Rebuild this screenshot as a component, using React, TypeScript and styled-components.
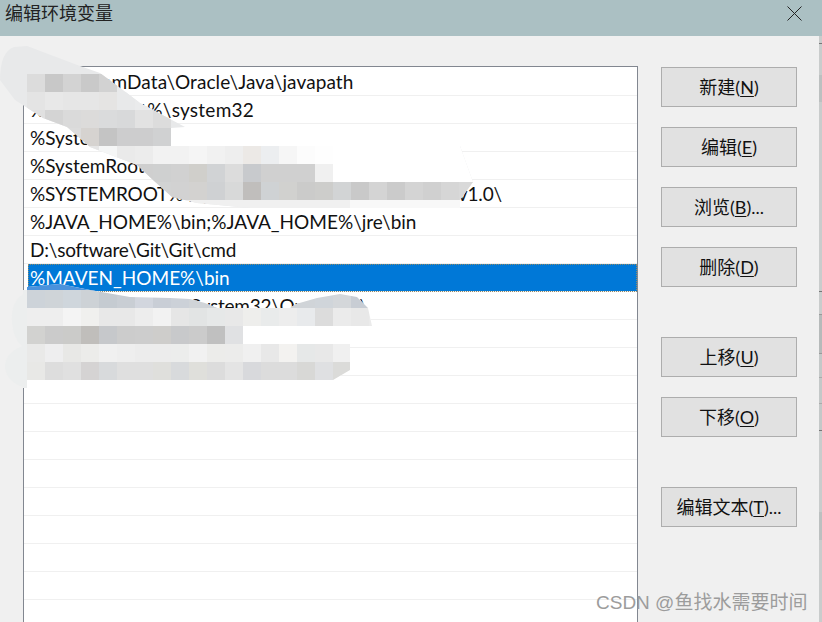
import { createGlobalStyle, styled } from "styled-components";

const GlobalStyle = createGlobalStyle`
  html, body {
    margin: 0;
    padding: 0;
    background: #f0f0f0;
  }
`;

const uiFont = `Lato, "Noto Sans CJK SC", sans-serif`;

// The dialog fills the whole photographed window and clips the list's lower part
const Dialog = styled.div`
  position: relative;
  width: 822px;
  height: 622px;
  overflow: hidden;
  background: #f0f0f0;
  font-family: ${uiFont};
  color: #111;
`;

const TitleBar = styled.div`
  height: 36px;
  padding-left: 5px;
  padding-right: 20px;
  display: flex;
  align-items: center;
  justify-content: space-between;
  background: #abc0c3;
`;

const Title = styled.span`
  font-family: "Noto Sans CJK SC", sans-serif;
  font-size: 18px;
  line-height: 26px;
  margin-top: -12px;
  color: #222;
`;

const CloseIcon = styled.svg`
  width: 15px;
  height: 15px;
  margin-top: -9px;
`;

const Body = styled.div`
  display: flex;
  padding: 30px 0 0 23px;
  gap: 23px;
`;

// Path list, it runs past the bottom of the window
const List = styled.ul`
  width: 613px;
  height: 640px;
  flex: none;
  margin: 0;
  padding: 1px 0 0;
  list-style: none;
  background: #fff;
  border: 1px solid #828790;
  border-bottom: none;
`;

// $tracking nudges a row's text so it ends where Segoe UI ended it
const Row = styled.li<{ $selected?: boolean; $tracking?: number }>`
  height: 27px;
  display: flex;
  align-items: center;
  font-size: 19px;
  line-height: 27px;
  letter-spacing: ${(p) => p.$tracking ?? 0}px;
  white-space: nowrap;
  overflow: hidden;
  border-bottom: 1px solid #f0f0f0;
  background: ${(p) => (p.$selected ? "#0078d7" : "transparent")};
  color: ${(p) => (p.$selected ? "#fff" : "#111")};
  margin-left: ${(p) => (p.$selected ? "4px" : "0")};
  padding-left: ${(p) => (p.$selected ? "2px" : "6px")};
  outline: ${(p) => (p.$selected ? "1px dotted #8f8a6a" : "none")};
  outline-offset: -1px;
`;

const ButtonColumn = styled.div`
  width: 136px;
  flex: none;
  padding-top: 1px;
  display: flex;
  flex-direction: column;
`;

const ButtonGroup = styled.div<{ $spaced?: boolean }>`
  display: flex;
  flex-direction: column;
  gap: 20px;
  margin-top: ${(p) => (p.$spaced ? "50px" : "0")};
`;

const DialogButton = styled.button`
  width: 136px;
  height: 40px;
  padding: 0 0 2px;
  box-sizing: border-box;
  background: #e1e1e1;
  border: 1px solid #adadad;
  font-family: ${uiFont};
  font-size: 18px;
  color: #111;
  u {
    text-underline-offset: 2px;
  }
`;

// Traces of the window behind, showing at the right edge
const BehindStrip = styled.div`
  position: absolute;
  top: 36px;
  right: 0;
  bottom: 0;
  width: 3px;
  background: linear-gradient(
    to bottom,
    #c9cccc 0 7px,
    #777 7px 8px,
    #c9cccc 8px 39px,
    #bcc0c0 39px 66px,
    #c9cccc 66px 255px,
    #777 255px 256px,
    #c9cccc 256px 278px,
    #999 278px 279px,
    #b6baba 279px 317px,
    #999 317px 318px,
    #c4c8c8 318px 341px,
    #aaa 341px 342px,
    #c4c8c8 342px 367px,
    #aaa 367px 368px,
    #c4c8c8 368px 394px,
    #777 394px 395px,
    #c9cccc 395px 476px,
    #bcc0c0 476px 504px,
    #c9cccc 504px
  );
`;

const Watermark = styled.div`
  position: absolute;
  left: 596px;
  top: 591px;
  font-family: "Liberation Sans", "Noto Sans CJK SC", sans-serif;
  font-size: 19px;
  line-height: 24px;
  color: #9c9c9c;
  white-space: nowrap;
`;

// The blurred-out patches somebody painted over the screenshot
const MosaicLayer = styled.svg`
  position: absolute;
  left: 0;
  top: 0;
  width: 822px;
  height: 622px;
  pointer-events: none;
`;

const CELL = 18;
const ORIGIN_X = 27;

const topCells: [number, string[]][] = [
  [74, ["#dcdcdc", "#c8c8c8", "#d3d3d3", "#c9c9c9", "#d2d2d2"]],
  [92, ["#e4e4e4", "#e8e8e8", "#e6e6e6", "#e6e6e6", "#e5e4e3", "#e8e9ea", "#eaebec"]],
  [110, ["#e0e0e0", "#d4d4d4", "#dadada", "#dcdbda", "#dadbdc", "#d8d9da", "#e2e2e2", "#dcdcdc"]],
  [128, ["#dcdcdc", "#dcdcdc", "#dcdcdc", "#d6d3d0", "#c4c4c4", "#cdcdce", "#cdcdce", "#d0d1d2"]],
  [146, ["#ececec", "#ececec", "#ececec", "#e6e6e6", "#f5f6f6", "#eaeaea", "#ececec", "#f2f2f2", "#f2f2f2", "#f5f5f5", "#f1f1f1", "#eeeeee", "#ece9e6", "#eceef0", "#f6f6f6", "#fcfcfc", "#fefefe"]],
  [164, ["#dcdcdc", "#dcdcdc", "#dcdcdc", "#dcdcdc", "#d8d8d8", "#d4d4d4", "#cfcfcf", "#cfd0d0", "#d1d1d1", "#d0cfcb", "#d1d3d5", "#dcdcdc", "#c8cacd", "#d0d0d0", "#d0d0d0", "#d0d0d0", "#f0f0f0"]],
  [182, ["#dcdcdc", "#dcdcdc", "#dcdcdc", "#dcdcdc", "#d8d8d8", "#d4d4d4", "#cfcfcf", "#d2d3d3", "#d2d2d2", "#d3d2d0", "#cfd1d3", "#d8d9d9", "#c0bebc", "#cfd2d4", "#d1d1cf", "#cbcbca", "#cdcdcb", "#d2d4d5", "#c9c9c9", "#d4d4d4", "#cbcbcb", "#d4d4d4", "#d0d0d0", "#d6d6d6", "#d9d9d9"]],
];

const bottomCells: [number, string[]][] = [
  [290, ["#cdd3d9", "#cfd4d8", "#cfd6dc", "#cdd2d6", "#c5cbd1", "#c9ced4", "#d2d6de", "#c9ced6", "#ccd1d8", "#d0d4d8", "#d0d4d8", "#d0d4d8", "#d0d4d8", "#d0d4d8", "#d0d4d8", "#d0d4d8", "#d0d5da", "#d4d7da", "#c8cdd4"]],
  [308, ["#eeeeee", "#eeeeee", "#f4f4f4", "#f0f0ee", "#e8e8e8", "#e8e8e8", "#ededed", "#f2f2f2", "#e6e6e6", "#e2e4e4", "#e6e8e8", "#e8e8e8", "#eeeeec", "#e9ebeb", "#ededed", "#e8eaec", "#dcdcdc", "#ebebeb", "#e8e8e8", "#ebebeb"]],
  [326, ["#d2d2d0", "#cbcbcb", "#cbcbc9", "#c0bebb", "#c6c8cb", "#cccccc", "#cdcdcd", "#cecdcb", "#c8c9cb", "#cbcbcb", "#c0c0c0", "#e0e1e3"]],
  [344, ["#e9e9e8", "#eeeeef", "#e8e8e6", "#ececea", "#f0f0f0", "#eeeeee", "#ececec", "#ececec", "#ecedec", "#f1f1f1", "#ececea", "#ececeb", "#f0f0f0", "#e8e8e8", "#f3f2f0", "#e6e8e8", "#e8e8e8", "#f0f0f0"]],
  [362, ["#e8e8e6", "#dddddd", "#e0e0e0", "#d5d3d3", "#d8dadc", "#dfdfdf", "#dfdfdf", "#dfdfdc", "#d8dadc", "#dfdfdb", "#dcdcdc", "#e4e4e4", "#d8d9dc", "#dcdcdc", "#dcdcdc", "#d8d8d6", "#dfe0e2", "#dbdbd9"]],
];

function Cells({ rows }: { rows: [number, string[]][] }) {
  return (
    <>
      {rows.map(([y, colors]) =>
        colors.map((c, i) => (
          <rect key={`${y}-${i}`} x={ORIGIN_X + i * CELL} y={y} width={CELL} height={CELL} fill={c} />
        ))
      )}
    </>
  );
}

function Mosaic() {
  return (
    <MosaicLayer viewBox="0 0 822 622">
      <defs>
        <clipPath id="topClip">
          <path d="M0 80 Q0 52 14 47 L27 46 L80 66 L100 73 L123 90 L140 103 L185 127 L171 128 L171 146 L333 146 L460 146 L473 182 L460 200 L460 208 L250 208 L197 203 L172 197 L153 180 L137 165 L90 147 L67 127 L43 118 L15 100 Z" />
        </clipPath>
        <clipPath id="bottomClip">
          <path d="M27 287 L60 284 L90 290 L130 297 L170 298 L190 299 L205 303 L217 308 L290 308 L296 304 L317 298 L340 294 L357 297 L368 308 L372 326 L372 344 L350 344 L350 370 L333 380 L27 380 Z" />
        </clipPath>
      </defs>

      {/* upper patch: grey smear first, white wash to the right, then the pixels */}
      <g clipPath="url(#topClip)">
        <rect x="0" y="40" width="480" height="170" fill="#e8e9ea" />
        <rect x="171" y="128" width="300" height="18" fill="#fff" />
        <rect x="315" y="146" width="160" height="36" fill="#fff" />
        <rect x="172" y="200" width="178" height="8" fill="#f0f0f0" />
        <rect x="350" y="200" width="120" height="8" fill="#f8f8f8" />
        <Cells rows={topCells} />
      </g>

      {/* lower patch: pale lobes left of the list, white below the pixels */}
      <path d="M27 292 Q10 300 12 322 Q13 338 22 346 Q4 354 5 368 Q8 384 27 388 Z" fill="#eceeee" />
      <rect x="27" y="380" width="330" height="9" fill="#fff" />
      <rect x="23" y="290" width="4" height="98" fill="#eceeee" />
      <g clipPath="url(#bottomClip)">
        <rect x="27" y="280" width="350" height="110" fill="#fff" />
        <rect x="27" y="280" width="110" height="11" fill="#4a92dc" />
        <Cells rows={bottomCells} />
      </g>
    </MosaicLayer>
  );
}

export default function App() {
  return (
    <Dialog>
      <GlobalStyle />
      <TitleBar>
        <Title>编辑环境变量</Title>
        <CloseIcon viewBox="0 0 15 15">
          <path d="M0.5 0.5L14.5 14.5M14.5 0.5L0.5 14.5" stroke="#222" strokeWidth="1" fill="none" />
        </CloseIcon>
      </TitleBar>
      <Body>
        <List>
          <Row $tracking={0.1}>C:\ProgramData\Oracle\Java\javapath</Row>
          <Row $tracking={0.25}>%SystemRoot%\system32</Row>
          <Row>%SystemRoot%</Row>
          <Row>%SystemRoot%\System32\Wbem</Row>
          <Row $tracking={-0.13}>%SYSTEMROOT%\System32\WindowsPowerShell\v1.0\</Row>
          <Row>%JAVA_HOME%\bin;%JAVA_HOME%\jre\bin</Row>
          <Row $tracking={-0.2}>D:\software\Git\Git\cmd</Row>
          <Row $selected>%MAVEN_HOME%\bin</Row>
          <Row $tracking={-0.2}>%SYSTEMROOT%\System32\OpenSSH\</Row>
          {Array.from({ length: 14 }, (_, i) => (
            <Row key={i} />
          ))}
        </List>
        <ButtonColumn>
          <ButtonGroup>
            <DialogButton>新建(<u>N</u>)</DialogButton>
            <DialogButton>编辑(<u>E</u>)</DialogButton>
            <DialogButton>浏览(<u>B</u>)...</DialogButton>
            <DialogButton>删除(<u>D</u>)</DialogButton>
          </ButtonGroup>
          <ButtonGroup $spaced>
            <DialogButton>上移(<u>U</u>)</DialogButton>
            <DialogButton>下移(<u>O</u>)</DialogButton>
          </ButtonGroup>
          <ButtonGroup $spaced>
            <DialogButton>编辑文本(<u>T</u>)...</DialogButton>
          </ButtonGroup>
        </ButtonColumn>
      </Body>
      <BehindStrip />
      <Mosaic />
      <Watermark>CSDN @鱼找水需要时间</Watermark>
    </Dialog>
  );
}
